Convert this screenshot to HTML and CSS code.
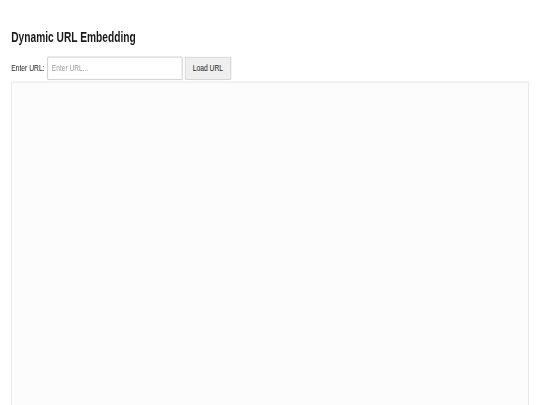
FILE: index.html
```html
<!DOCTYPE html>
<html lang="en">
<head>
<meta charset="utf-8">
<title>Dynamic URL Embedding</title>
<link rel="stylesheet" href="styles.css">
</head>
<body>
<div class="stage">
  <div class="page">
    <h2 class="title">Dynamic URL Embedding</h2>
    <div class="controls">
      <label class="label" for="url">Enter URL:</label>
      <input class="url-input" id="url" type="text" placeholder="Enter URL...">
      <button class="load-btn" type="button">Load URL</button>
    </div>
    <div class="frame"></div>
  </div>
</div>
</body>
</html>
```

FILE: styles.css
```css
html, body {
  margin: 0;
  padding: 0;
  background: #ffffff;
  overflow: hidden;
}

.stage {
  width: 1344px;
  height: 720px;
  overflow: hidden;
  transform: scale(0.401786, 0.5625);
  transform-origin: 0 0;
  font-family: "Liberation Sans", Arial, sans-serif;
  color: #222222;
}

.page {
  padding: 28px 28px 0 28px;
}

.title {
  font-size: 25.4px;
  line-height: 28px;
  font-weight: bold;
  margin: 23px 0 22px 0;
  color: #1a1a1a;
}

.controls {
  display: flex;
  align-items: center;
}

.label {
  font-size: 16.8px;
  margin-right: 7px;
  color: #1a1a1a;
}

.url-input {
  box-sizing: border-box;
  width: 336px;
  height: 41px;
  padding: 0 10px;
  font-family: "Liberation Sans", Arial, sans-serif;
  font-size: 16.4px;
  color: #222222;
  border: 1px solid #999999;
  border-radius: 2px;
  margin: 0 6px 0 0;
  background: #ffffff;
}

.url-input::placeholder {
  color: #9a9a9a;
}

.load-btn {
  box-sizing: border-box;
  width: 115px;
  height: 41px;
  padding: 0;
  font-family: "Liberation Sans", Arial, sans-serif;
  font-size: 16.8px;
  color: #222222;
  background: #efefef;
  border: 1px solid #aaaaaa;
  border-radius: 3px;
}

.frame {
  margin-top: 3px;
  height: 640px;
  border: 2px solid #e8e8e8;
  background: #fcfcfc;
}
```
